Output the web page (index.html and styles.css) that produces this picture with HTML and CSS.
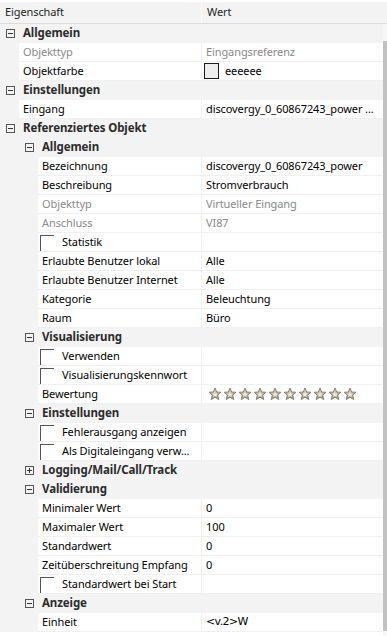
FILE: index.html
```html
<!DOCTYPE html>
<html lang="de">
<head>
    <meta charset="UTF-8">
    <title>Eigenschaften</title>
    <link rel="stylesheet" href="styles.css">
</head>
<body>
    <svg width="0" height="0" class="defs">
        <defs>
            <linearGradient id="starfill" x1="0" y1="0" x2="0" y2="1">
                <stop offset="0" stop-color="#d6d1c0"/>
                <stop offset="1" stop-color="#9a937e"/>
            </linearGradient>
            <symbol id="star" viewBox="0 0 14 14">
                <path d="M7 1 L8.7 5 L13 5.3 L9.7 8.1 L10.8 12.6 L7 10.2 L3.2 12.6 L4.3 8.1 L1 5.3 L5.3 5 Z" fill="url(#starfill)" stroke="#8c8571" stroke-width="1"/>
                <path d="M7 4.5 L7.9 6.6 L9.8 6.8 L8.4 8.1 L8.8 10 L7 8.9 L5.2 10 L5.6 8.1 L4.2 6.8 L6.1 6.6 Z" fill="#ece9df"/>
            </symbol>
        </defs>
    </svg>
    <div class="grid">
        <div class="head">
            <div class="head-name">Eigenschaft</div>
            <div class="head-value">Wert</div>
        </div>

        <div class="rows">
            <!-- Allgemein -->
            <div class="cat lv0"><span class="toggle"></span><b>Allgemein</b></div>
            <div class="row lv1"><div class="name off">Objekttyp</div><div class="value off">Eingangsreferenz</div></div>
            <div class="row lv1"><div class="name">Objektfarbe</div><div class="value"><span class="swatch"></span>eeeeee</div></div>

            <!-- Einstellungen -->
            <div class="cat lv0"><span class="toggle"></span><b>Einstellungen</b></div>
            <div class="row lv1"><div class="name">Eingang</div><div class="value">discovergy_0_60867243_power ...</div></div>

            <!-- Referenziertes Objekt -->
            <div class="cat lv0"><span class="toggle"></span><b>Referenziertes Objekt</b></div>
            <div class="cat lv1"><span class="toggle"></span><b>Allgemein</b></div>
            <div class="row lv2"><div class="name">Bezeichnung</div><div class="value">discovergy_0_60867243_power</div></div>
            <div class="row lv2"><div class="name">Beschreibung</div><div class="value">Stromverbrauch</div></div>
            <div class="row lv2"><div class="name off">Objekttyp</div><div class="value off">Virtueller Eingang</div></div>
            <div class="row lv2"><div class="name off">Anschluss</div><div class="value off">VI87</div></div>
            <div class="row lv2"><div class="name"><span class="check"></span>Statistik</div><div class="value"></div></div>
            <div class="row lv2"><div class="name">Erlaubte Benutzer lokal</div><div class="value">Alle</div></div>
            <div class="row lv2"><div class="name">Erlaubte Benutzer Internet</div><div class="value">Alle</div></div>
            <div class="row lv2"><div class="name">Kategorie</div><div class="value">Beleuchtung</div></div>
            <div class="row lv2"><div class="name">Raum</div><div class="value">Büro</div></div>

            <div class="cat lv1"><span class="toggle"></span><b>Visualisierung</b></div>
            <div class="row lv2"><div class="name"><span class="check"></span>Verwenden</div><div class="value"></div></div>
            <div class="row lv2"><div class="name"><span class="check"></span>Visualisierungskennwort</div><div class="value"></div></div>
            <div class="row lv2"><div class="name">Bewertung</div><div class="value stars">
                <svg><use href="#star"/></svg><svg><use href="#star"/></svg><svg><use href="#star"/></svg><svg><use href="#star"/></svg><svg><use href="#star"/></svg><svg><use href="#star"/></svg><svg><use href="#star"/></svg><svg><use href="#star"/></svg><svg><use href="#star"/></svg><svg><use href="#star"/></svg>
            </div></div>

            <div class="cat lv1"><span class="toggle"></span><b>Einstellungen</b></div>
            <div class="row lv2"><div class="name"><span class="check"></span>Fehlerausgang anzeigen</div><div class="value"></div></div>
            <div class="row lv2"><div class="name"><span class="check"></span>Als Digitaleingang verw...</div><div class="value"></div></div>

            <div class="cat lv1"><span class="toggle closed"></span><b>Logging/Mail/Call/Track</b></div>

            <div class="cat lv1"><span class="toggle"></span><b>Validierung</b></div>
            <div class="row lv2"><div class="name">Minimaler Wert</div><div class="value">0</div></div>
            <div class="row lv2"><div class="name">Maximaler Wert</div><div class="value">100</div></div>
            <div class="row lv2"><div class="name">Standardwert</div><div class="value">0</div></div>
            <div class="row lv2"><div class="name">Zeitüberschreitung Empfang</div><div class="value">0</div></div>
            <div class="row lv2"><div class="name"><span class="check"></span>Standardwert bei Start</div><div class="value"></div></div>

            <div class="cat lv1"><span class="toggle"></span><b>Anzeige</b></div>
            <div class="row lv2"><div class="name">Einheit</div><div class="value unit">&lt;v.2&gt;W</div></div>
        </div>

        <div class="scrollbar"><div class="thumb"></div></div>
    </div>
</body>
</html>
```

FILE: styles.css
```css
body {
    margin: 0;
    background: #fff;
    font-family: "Noto Sans", "Open Sans", sans-serif;
    font-size: 11px;
    letter-spacing: -0.1px;
    color: #000;
}
.defs {
    position: absolute;
}
.grid {
    position: relative;
    width: 387px;
    height: 636px;
    overflow: hidden;
}
.head {
    display: flex;
    height: 21px;
    line-height: 20px;
    border-top: 2px solid #fff;
    border-bottom: 1px solid #dcdcdc;
    background: #f3f3f3;
    color: #1e1e1e;
}
.head-name {
    width: 196px;
    padding-left: 5px;
    border-right: 1px solid #fbfbfb;
}
.head-value {
    padding-left: 5px;
}
.rows {
    width: 383px;
}
.row, .cat {
    display: flex;
    align-items: center;
    height: 19px;
    background: #f3f3f3;
}
.cat b {
    padding-bottom: 2px;
    color: #2b2b2b;
    font-size: 11.5px;
    font-weight: 700;
}
.row.lv1 { padding-left: 19px; }
.row.lv2 { padding-left: 38px; }
.name {
    box-sizing: border-box;
    display: flex;
    align-items: center;
    height: 19px;
    padding-left: 4px;
    padding-bottom: 1px;
    background: #fff;
    border-bottom: 1px solid #f0f0f0;
    white-space: nowrap;
    overflow: hidden;
}
.lv1 .name { width: 182px; }
.lv2 .name { width: 163px; }
.value {
    box-sizing: border-box;
    display: flex;
    align-items: center;
    flex: 1;
    height: 19px;
    padding-left: 4px;
    padding-bottom: 1px;
    background: #fff;
    border-left: 1px solid #f0f0f0;
    border-bottom: 1px solid #f0f0f0;
    white-space: nowrap;
    overflow: hidden;
}
.off {
    color: #8a8a8a;
}
.cat.lv0 { padding-left: 6px; }
.cat.lv1 { padding-left: 25px; }
.toggle {
    position: relative;
    box-sizing: border-box;
    width: 9px;
    height: 9px;
    margin-right: 8px;
    border: 1px solid #555;
}
.toggle::before {
    content: "";
    position: absolute;
    left: 1px;
    top: 3px;
    width: 5px;
    height: 1px;
    background: #333;
}
.toggle.closed::after {
    content: "";
    position: absolute;
    left: 3px;
    top: 1px;
    width: 1px;
    height: 5px;
    background: #333;
}
.check {
    box-sizing: border-box;
    align-self: flex-end;
    width: 14px;
    height: 16px;
    margin-bottom: -1px;
    margin-left: -2px;
    margin-right: 8px;
    border-top: 1px solid #555;
    border-left: 1px solid #555;
}
.swatch {
    box-sizing: border-box;
    width: 15px;
    height: 16px;
    margin-left: -2px;
    margin-right: 6px;
    border: 1px solid #1a1a1a;
    background: #eeeeee;
}
.stars svg {
    width: 14px;
    height: 14px;
    margin-right: 1px;
}
.stars {
    padding-left: 6px;
}
.unit {
    font-family: "DejaVu Sans", sans-serif;
    font-size: 11px;
    letter-spacing: -0.6px;
}
.scrollbar {
    position: absolute;
    top: 24px;
    right: 0;
    width: 4px;
    height: 612px;
    background: #f7f7f7;
}
.thumb {
    margin-top: 17px;
    height: 590px;
    background: #c2c2c2;
}
```
